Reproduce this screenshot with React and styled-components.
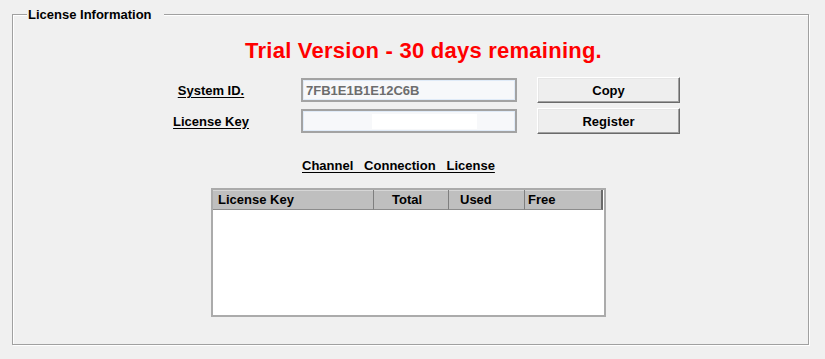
import * as React from "react"
import styled, { createGlobalStyle } from "styled-components"

// Global
const GlobalStyle = createGlobalStyle`
html, body {
  margin: 0;
  padding: 0;
  background: #f0f0f0;
}
body {
  font-family: "Liberation Sans", Arial, sans-serif;
  font-size: 13px;
  color: #000;
}
`

// Styled Components
const Page = styled.div`
width: 825px;
height: 359px;
box-sizing: border-box;
padding: 14px 16px 0 12px;
background: #f0f0f0;
overflow: hidden;
`

const Group = styled.section`
display: flex;
flex-direction: column;
align-items: flex-start;
border: 1px solid #a0a0a0;
box-shadow: inset 1px 1px 0 #fff, 1px 1px 0 #fff;
padding: 0 0 27px 0;
`

const Legend = styled.div`
margin: -8px 0 0 14px;
padding: 0 12px 0 1px;
background: #f0f0f0;
font-weight: bold;
font-size: 13px;
line-height: 16px;
`

const Title = styled.h1`
margin: 15px 0 0 232px;
font-size: 22px;
line-height: 26px;
font-weight: bold;
letter-spacing: 0.25px;
color: #ff0000;
`

const Rows = styled.div`
display: flex;
flex-direction: column;
gap: 5px;
margin: 13px 0 0 138px;
`

const Row = styled.div`
display: flex;
align-items: center;
height: 26px;
`

const Label = styled.span`
width: 120px;
text-align: center;
font-weight: bold;
text-decoration: underline;
text-underline-offset: 2px;
`

const Field = styled.div`
display: flex;
align-items: center;
box-sizing: border-box;
width: 216px;
height: 24px;
margin-left: 30px;
padding-left: 3px;
border: 2px solid #a3a3a3;
box-shadow: inset 0 0 0 1px #e0ebf8;
background: #f7f8fa;
color: #6d6d6d;
font-weight: bold;
`

const Masked = styled.span`
display: block;
width: 105px;
height: 15px;
margin-left: 66px;
background: #fff;
`

const Button = styled.button`
box-sizing: border-box;
width: 143px;
height: 26px;
margin-left: 20px;
padding: 0;
border: 1px solid;
border-color: #fff #6a6a6a #6a6a6a #fff;
box-shadow: inset -1px -1px 0 #a0a0a0, inset 1px 1px 0 #e6e6e6;
background: #eeeeee;
font-family: "Liberation Sans", Arial, sans-serif;
font-size: 13px;
font-weight: bold;
color: #000;
`

const Heading = styled.h2`
margin: 24px 0 0 289px;
font-size: 13px;
line-height: 16px;
font-weight: bold;
white-space: pre;
text-decoration: underline;
text-underline-offset: 2px;
`

const Table = styled.div`
box-sizing: border-box;
width: 395px;
height: 129px;
margin: 14px 0 0 198px;
border: 2px solid #ababab;
background: #fff;
`

const HeaderRow = styled.div`
display: flex;
height: 20px;
`

const HeadCell = styled.div`
box-sizing: border-box;
width: ${p => p.$w}px;
padding-left: ${p => p.$pad}px;
border-right: ${p => (p.$last ? "2px solid #6a6a6a" : "1px solid #7f7f7f")};
border-bottom: 1px solid #8c8c8c;
box-shadow: inset 0 1px 0 #d6d6d6;
background: #bfbfbf;
font-weight: bold;
line-height: 19px;
`

const columns = [
  { name: "License Key", w: 161, pad: 5 },
  { name: "Total", w: 75, pad: 18 },
  { name: "Used", w: 76, pad: 11 },
  { name: "Free", w: 78, pad: 3, last: true },
]

// markup
const App = () => {
  return (
    <Page>
      <GlobalStyle/>
      <Group>
        <Legend>License Information</Legend>
        <Title>Trial Version - 30 days remaining.</Title>
        <Rows>
          <Row>
            <Label>System ID.</Label>
            <Field>7FB1E1B1E12C6B</Field>
            <Button>Copy</Button>
          </Row>
          <Row>
            <Label>License Key</Label>
            <Field><Masked/></Field>
            <Button>Register</Button>
          </Row>
        </Rows>
        <Heading>{"Channel   Connection   License"}</Heading>
        <Table>
          <HeaderRow>
            {columns.map(c => (
              <HeadCell key={c.name} $w={c.w} $pad={c.pad} $last={c.last}>{c.name}</HeadCell>
            ))}
          </HeaderRow>
        </Table>
      </Group>
    </Page>
  )
}

export default App
